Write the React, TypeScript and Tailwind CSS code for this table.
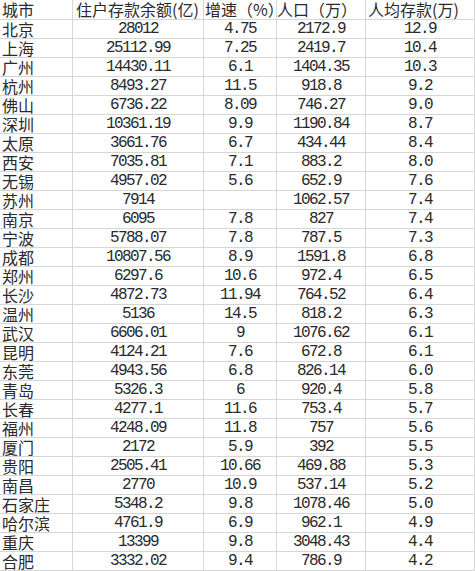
const rows: [string, string, string, string, string][] = [
  ["北京", "28012", "4.75", "2172.9", "12.9"],
  ["上海", "25112.99", "7.25", "2419.7", "10.4"],
  ["广州", "14430.11", "6.1", "1404.35", "10.3"],
  ["杭州", "8493.27", "11.5", "918.8", "9.2"],
  ["佛山", "6736.22", "8.09", "746.27", "9.0"],
  ["深圳", "10361.19", "9.9", "1190.84", "8.7"],
  ["太原", "3661.76", "6.7", "434.44", "8.4"],
  ["西安", "7035.81", "7.1", "883.2", "8.0"],
  ["无锡", "4957.02", "5.6", "652.9", "7.6"],
  ["苏州", "7914", "", "1062.57", "7.4"],
  ["南京", "6095", "7.8", "827", "7.4"],
  ["宁波", "5788.07", "7.8", "787.5", "7.3"],
  ["成都", "10807.56", "8.9", "1591.8", "6.8"],
  ["郑州", "6297.6", "10.6", "972.4", "6.5"],
  ["长沙", "4872.73", "11.94", "764.52", "6.4"],
  ["温州", "5136", "14.5", "818.2", "6.3"],
  ["武汉", "6606.01", "9", "1076.62", "6.1"],
  ["昆明", "4124.21", "7.6", "672.8", "6.1"],
  ["东莞", "4943.56", "6.8", "826.14", "6.0"],
  ["青岛", "5326.3", "6", "920.4", "5.8"],
  ["长春", "4277.1", "11.6", "753.4", "5.7"],
  ["福州", "4248.09", "11.8", "757", "5.6"],
  ["厦门", "2172", "5.9", "392", "5.5"],
  ["贵阳", "2505.41", "10.66", "469.88", "5.3"],
  ["南昌", "2770", "10.9", "537.14", "5.2"],
  ["石家庄", "5348.2", "9.8", "1078.46", "5.0"],
  ["哈尔滨", "4761.9", "6.9", "962.1", "4.9"],
  ["重庆", "13399", "9.8", "3048.43", "4.4"],
  ["合肥", "3332.02", "9.4", "786.9", "4.2"],
];

const cjk = "font-['Noto_Sans_CJK_SC',sans-serif]";
const mono = "font-['Liberation_Mono','Noto_Sans_CJK_SC',monospace] tracking-[-1.6px]";
const cell = "border-r border-b border-[#d6d6d6] whitespace-nowrap";

export default function App() {
  return (
    <div className="w-[475px] h-[571px] bg-white text-[#2a2a2a] text-[16px] leading-[18px]">
      <div className="grid grid-cols-[73px_131px_73px_89px_109px]">
        <div className={`${cell} ${cjk} h-[20px] pl-[2px]`}>城市</div>
        <div className={`${cell} ${cjk} h-[20px] pl-[3px]`}>住户存款余额(亿)</div>
        <div className={`${cell} ${cjk} h-[20px] pl-[1px]`}>增速（%）</div>
        <div className={`${cell} ${cjk} h-[20px]`}>人口（万）</div>
        <div className={`${cell} ${cjk} h-[20px] pl-[2px]`}>人均存款(万)</div>
        {rows.map((r) => (
          <div key={r[0]} className="contents">
            <div className={`${cell} ${cjk} h-[19px] pl-[2px]`}>{r[0]}</div>
            <div className={`${cell} ${mono} h-[19px] text-center`}>{r[1]}</div>
            <div className={`${cell} ${mono} h-[19px] text-center`}>{r[2]}</div>
            <div className={`${cell} ${mono} h-[19px] text-center`}>{r[3]}</div>
            <div className={`${cell} ${mono} h-[19px] text-center`}>{r[4]}</div>
          </div>
        ))}
      </div>
    </div>
  );
}
